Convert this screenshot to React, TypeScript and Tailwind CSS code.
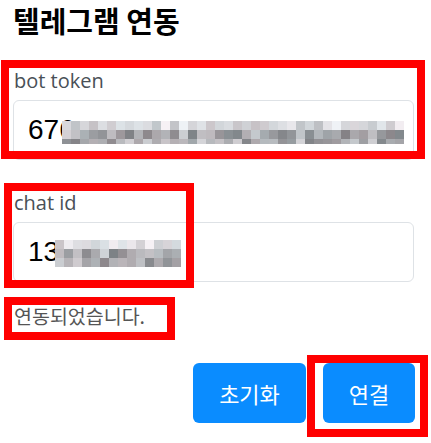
import React from "react";

function rand(seed: number) {
  let s = seed;
  return () => {
    s = (s * 9301 + 49297) % 233280;
    return s / 233280;
  };
}

function Mosaic({ cols, rows, seed, heights }: { cols: number; rows: number; seed: number; heights: number[] }) {
  const r = rand(seed);
  const cells: React.ReactElement[] = [];
  let y = 0;
  for (let j = 0; j < rows; j++) {
    for (let i = 0; i < cols; i++) {
      const v = j === 0 ? 190 + Math.floor(r() * 55) : 130 + Math.floor(r() * 85);
      const t = Math.floor(r() * 12) - 6;
      cells.push(
        <rect key={`${i}-${j}`} x={i * 9} y={y} width={9} height={heights[j]} fill={`rgb(${v + t},${v},${v + 4})`} />
      );
    }
    y += heights[j];
  }
  const h = heights.reduce((a, b) => a + b, 0);
  return (
    <svg width={cols * 9} height={h} viewBox={`0 0 ${cols * 9} ${h}`} className="block shrink-0">
      {cells}
    </svg>
  );
}

export default function App() {
  return (
    <div
      className="relative w-[431px] h-[443px] bg-white overflow-hidden px-[13px]"
      style={{ fontFamily: '"Noto Sans CJK KR", "Noto Sans", sans-serif' }}
    >
      <h1 className="pt-[3px] text-[29px] leading-[34px] font-bold text-black">텔레그램 연동</h1>

      <div className="mt-[29px]">
        <div
          className="text-[20px] leading-[30px] text-[#495057] pl-[1px]"
          style={{ fontFamily: '"Open Sans", "Noto Sans CJK KR", sans-serif' }}
        >
          bot token
        </div>
        <div className="mt-[4px] h-[60px] w-[401px] rounded-[6px] border border-[#dee2e6] flex items-center pl-[14px] overflow-hidden">
          <span className="text-[28px] text-black" style={{ fontFamily: '"Liberation Sans", sans-serif' }}>676</span>
          <div className="-ml-[13px] mt-[4px]">
            <Mosaic cols={38} rows={3} seed={7} heights={[9, 9, 5]} />
          </div>
        </div>
      </div>

      <div className="mt-[28px]">
        <div
          className="text-[20px] leading-[30px] text-[#495057] pl-[1px]"
          style={{ fontFamily: '"Open Sans", "Noto Sans CJK KR", sans-serif' }}
        >
          chat id
        </div>
        <div className="mt-[4px] h-[60px] w-[401px] rounded-[6px] border border-[#dee2e6] flex items-center pl-[14px] overflow-hidden">
          <span className="text-[28px] text-black" style={{ fontFamily: '"Liberation Sans", sans-serif' }}>13</span>
          <div className="-ml-[4px] mt-[2px]">
            <Mosaic cols={14} rows={3} seed={23} heights={[9, 9, 9]} />
          </div>
        </div>
      </div>

      <div className="mt-[21px] pl-[1px] text-[19.5px] leading-[26px] text-[#555]">연동되었습니다.</div>

      <div className="mt-[34px] flex justify-end gap-[17px] pr-[3px]">
        <button className="h-[60px] w-[113px] rounded-[6px] bg-[#0a8cff] text-white text-[22px]">초기화</button>
        <button className="h-[60px] w-[92px] rounded-[6px] bg-[#0a8cff] text-white text-[22px]">연결</button>
      </div>

      <div className="absolute left-[1px] top-[60px] w-[424px] h-[99px] border-[8px] border-[#ff0000]" />
      <div className="absolute left-[4px] top-[183px] w-[190px] h-[105px] border-[8px] border-[#ff0000]" />
      <div className="absolute left-[4px] top-[297px] w-[171px] h-[43px] border-[8px] border-[#ff0000]" />
      <div className="absolute left-[307px] top-[355px] w-[121px] h-[82px] border-[8px] border-[#ff0000]" />
    </div>
  );
}
